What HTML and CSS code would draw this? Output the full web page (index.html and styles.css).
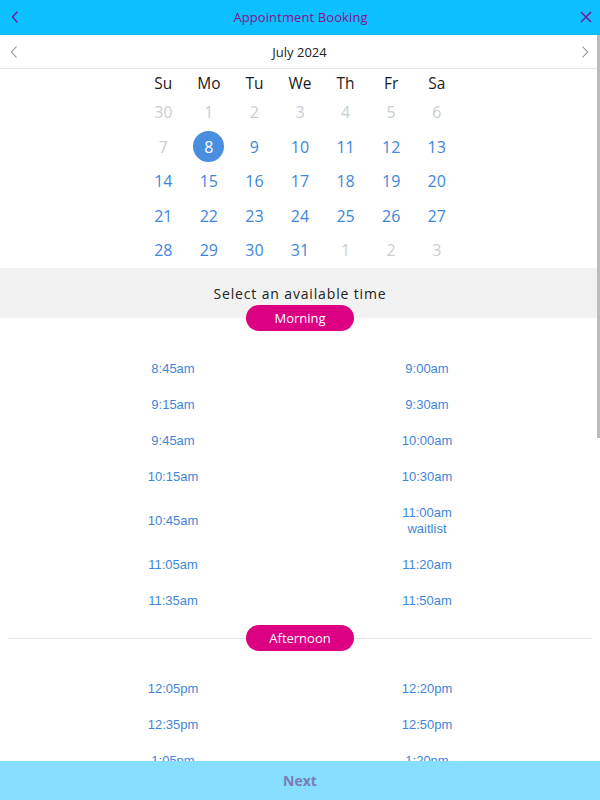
FILE: index.html
```html
<!DOCTYPE html>
<html lang="en">
<head>
<meta charset="utf-8">
<title>Appointment Booking</title>
<link rel="stylesheet" href="styles.css">
</head>
<body>
<div class="app">
  <header class="topbar">
    <button class="icon-btn" aria-label="Back">
      <svg width="10" height="14" viewBox="0 0 10 14"><path d="M7.5 1.5 L2.5 7 L7.5 12.5" fill="none" stroke="#7a1a9a" stroke-width="1.4"/></svg>
    </button>
    <h1 class="title">Appointment Booking</h1>
    <button class="icon-btn" aria-label="Close">
      <svg width="14" height="14" viewBox="0 0 14 14"><path d="M2 2 L12 12 M12 2 L2 12" fill="none" stroke="#7a1a9a" stroke-width="1.5"/></svg>
    </button>
  </header>

  <main class="scroll">
    <div class="month-nav">
      <button class="nav-btn" aria-label="Previous month">
        <svg width="8" height="14" viewBox="0 0 8 14"><path d="M6.5 1.5 L1.5 7 L6.5 12.5" fill="none" stroke="#8a8f96" stroke-width="1.1"/></svg>
      </button>
      <span class="month">July 2024</span>
      <button class="nav-btn" aria-label="Next month">
        <svg width="8" height="14" viewBox="0 0 8 14"><path d="M1.5 1.5 L6.5 7 L1.5 12.5" fill="none" stroke="#8a8f96" stroke-width="1.1"/></svg>
      </button>
    </div>

    <div class="calendar">
      <div class="dow">Su</div><div class="dow">Mo</div><div class="dow">Tu</div><div class="dow">We</div><div class="dow">Th</div><div class="dow">Fr</div><div class="dow">Sa</div>
      <div class="day out">30</div><div class="day out">1</div><div class="day out">2</div><div class="day out">3</div><div class="day out">4</div><div class="day out">5</div><div class="day out">6</div>
      <div class="day out">7</div><div class="day"><span class="sel">8</span></div><div class="day">9</div><div class="day">10</div><div class="day">11</div><div class="day">12</div><div class="day">13</div>
      <div class="day">14</div><div class="day">15</div><div class="day">16</div><div class="day">17</div><div class="day">18</div><div class="day">19</div><div class="day">20</div>
      <div class="day">21</div><div class="day">22</div><div class="day">23</div><div class="day">24</div><div class="day">25</div><div class="day">26</div><div class="day">27</div>
      <div class="day">28</div><div class="day">29</div><div class="day">30</div><div class="day">31</div><div class="day out">1</div><div class="day out">2</div><div class="day out">3</div>
    </div>

    <div class="time-head">Select an available time</div>

    <div class="period first"><span class="pill">Morning</span></div>
    <div class="slots">
      <div class="slot">8:45am</div><div class="slot">9:00am</div>
      <div class="slot">9:15am</div><div class="slot">9:30am</div>
      <div class="slot">9:45am</div><div class="slot">10:00am</div>
      <div class="slot">10:15am</div><div class="slot">10:30am</div>
      <div class="slot">10:45am</div><div class="slot">11:00am<br>waitlist</div>
      <div class="slot">11:05am</div><div class="slot">11:20am</div>
      <div class="slot">11:35am</div><div class="slot">11:50am</div>
    </div>

    <div class="period divider"><span class="pill">Afternoon</span></div>
    <div class="slots">
      <div class="slot">12:05pm</div><div class="slot">12:20pm</div>
      <div class="slot">12:35pm</div><div class="slot">12:50pm</div>
      <div class="slot">1:05pm</div><div class="slot">1:20pm</div>
    </div>

    <div class="thumb"></div>
  </main>

  <footer class="footer">Next</footer>
</div>
</body>
</html>
```

FILE: styles.css
```css
* { box-sizing: border-box; }
html, body { margin: 0; padding: 0; }
body {
  font-family: "Open Sans", "Noto Sans", sans-serif;
  background: #ffffff;
  color: #222;
}
.app {
  width: 600px;
  height: 800px;
  display: flex;
  flex-direction: column;
  overflow: hidden;
}
.topbar {
  height: 35px;
  flex: none;
  background: #0cc0fe;
  display: flex;
  align-items: center;
  justify-content: space-between;
  padding: 0 4px 1px 5px;
}
.icon-btn, .nav-btn {
  background: none;
  border: 0;
  padding: 0;
  width: 20px;
  height: 20px;
  display: flex;
  align-items: center;
  justify-content: center;
  cursor: pointer;
}
.title {
  margin: 0;
  font-size: 13px;
  font-weight: 500;
  color: #86108c;
  letter-spacing: 0.1px;
}
.scroll {
  flex: 1;
  position: relative;
  overflow: hidden;
}
.month-nav {
  height: 34px;
  border-bottom: 1px solid #e4e4e4;
  display: flex;
  align-items: center;
  justify-content: space-between;
  padding: 0 5px 0 4px;
}
.month {
  font-size: 13px;
  color: #222;
}
.calendar {
  width: 319px;
  margin: 0 auto;
  display: grid;
  grid-template-columns: repeat(7, 1fr);
  grid-template-rows: 26px repeat(5, 34.5px);
  height: 199px;
}
.dow {
  display: flex;
  align-items: center;
  justify-content: center;
  font-size: 15.5px;
  color: #1a1a1a;
  padding-top: 2px;
}
.day {
  display: flex;
  align-items: center;
  justify-content: center;
  font-size: 16px;
  color: #3f86da;
}
.day.out { color: #c9ced3; }
.sel {
  width: 31px;
  height: 31px;
  border-radius: 50%;
  background: #4a8ee0;
  color: #fff;
  display: flex;
  align-items: center;
  justify-content: center;
}
.time-head {
  height: 50px;
  background: #f2f2f2;
  display: flex;
  align-items: center;
  justify-content: center;
  font-size: 14px;
  letter-spacing: 0.85px;
  color: #222;
  padding-top: 1px;
}
.period {
  display: flex;
  justify-content: center;
  position: relative;
  margin: 6px 8px 20px;
}
.period.first { margin-top: -13px; }
.period.divider::before {
  content: "";
  position: absolute;
  left: 0;
  right: 0;
  top: 50%;
  border-top: 1px solid #e2e7ed;
}
.pill {
  position: relative;
  width: 108px;
  height: 26px;
  border-radius: 13px;
  background: #dc0083;
  color: #fff;
  font-size: 13px;
  font-weight: 500;
  display: flex;
  align-items: center;
  justify-content: center;
}
.slots {
  display: grid;
  grid-template-columns: 1fr 1fr;
  padding: 0 46px;
}
.slot {
  font-family: "Liberation Sans", Arial, sans-serif;
  font-size: 13px;
  line-height: 16px;
  color: #3f86da;
  text-align: center;
  padding: 10px 0;
  display: flex;
  flex-direction: column;
  justify-content: center;
}
.thumb {
  position: absolute;
  top: 0;
  right: 0;
  width: 3px;
  height: 403px;
  background: #bdbdbd;
}
.footer {
  height: 39px;
  flex: none;
  background: #86dffe;
  color: #7b7db6;
  font-weight: 700;
  font-size: 14px;
  display: flex;
  align-items: center;
  justify-content: center;
  position: relative;
}
```
